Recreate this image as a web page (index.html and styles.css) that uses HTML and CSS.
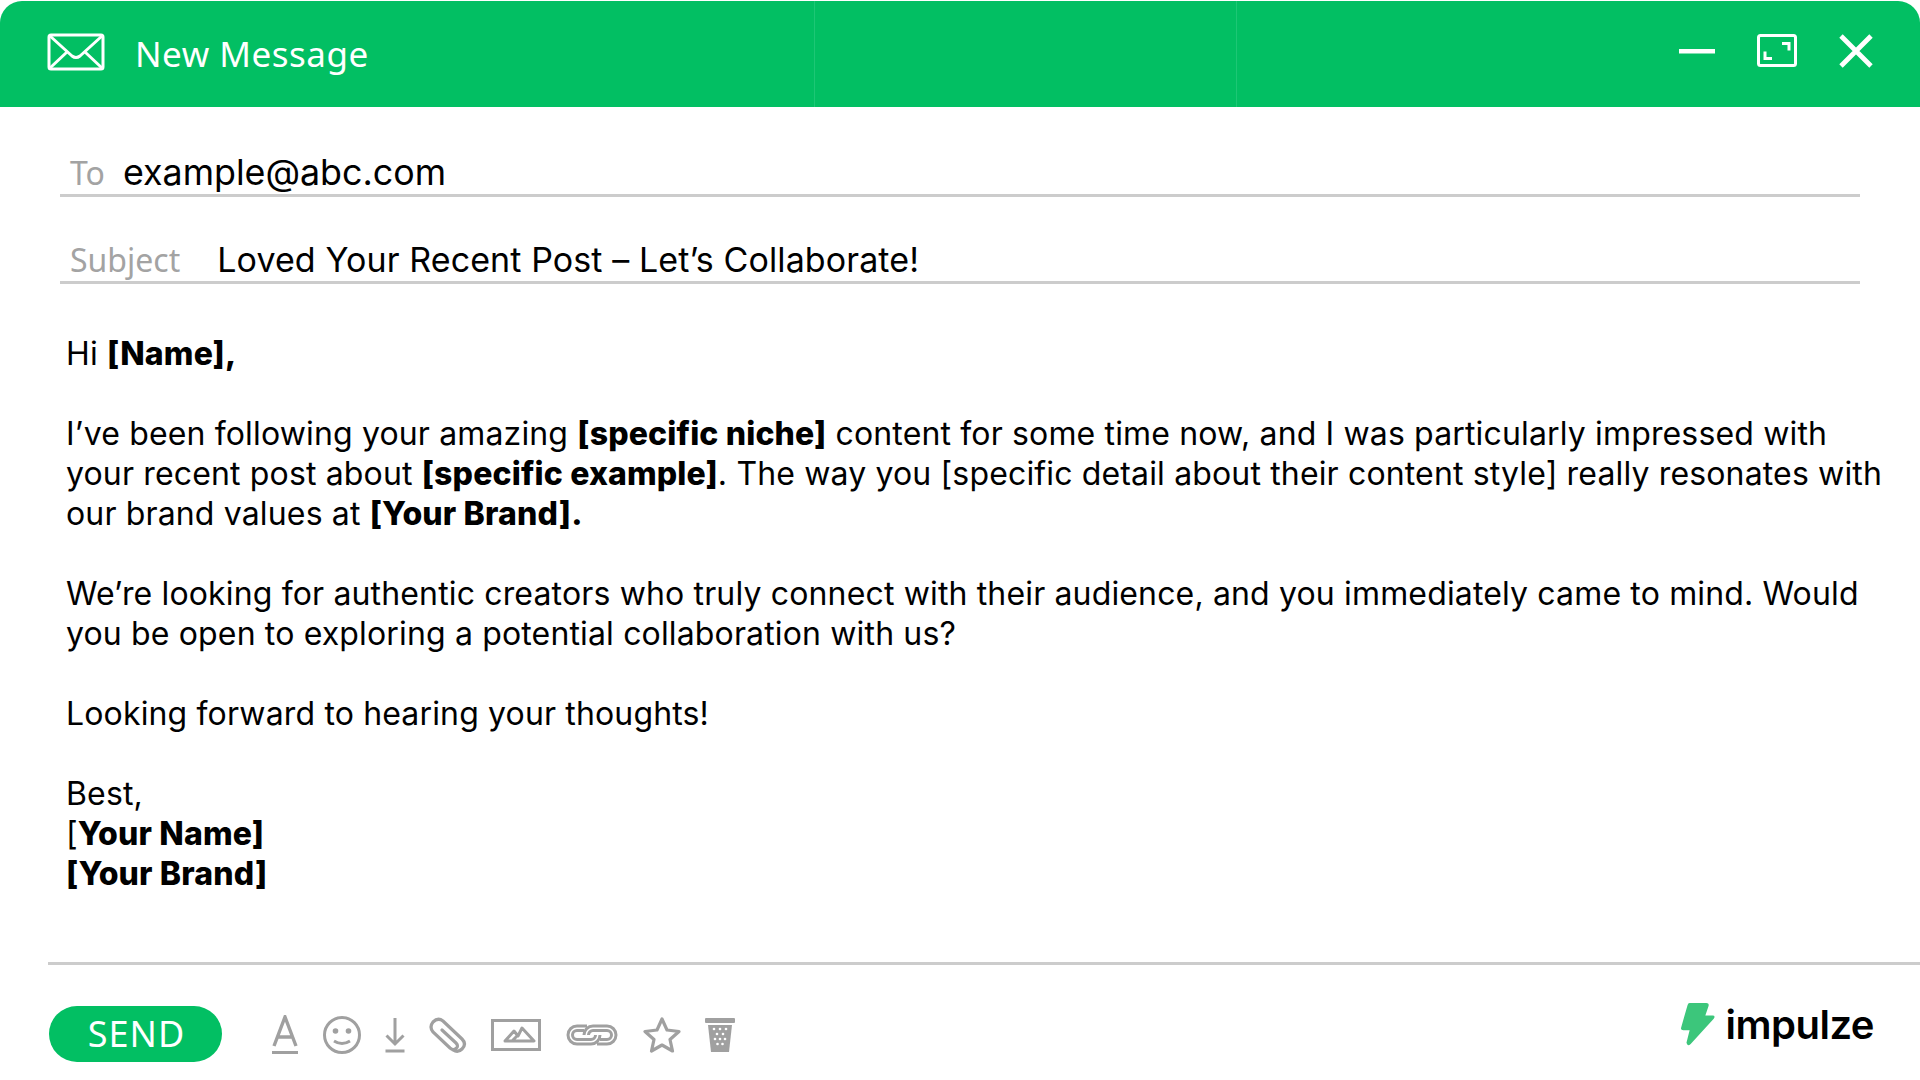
FILE: index.html
```html
<!DOCTYPE html>
<html lang="en">
<head>
  <meta charset="UTF-8">
  <title>New Message</title>
  <link rel="stylesheet" href="styles.css">
</head>
<body>
<div class="window">
  <header class="titlebar">
    <div class="titlebar-left">
      <svg class="mail-icon" width="58" height="38" viewBox="0 0 58 38" fill="none" stroke="#fff" stroke-width="3" stroke-linejoin="round">
        <rect x="2" y="2" width="54" height="34" rx="2"/>
        <path d="M3 3 L25 23 Q29 26 33 23 L55 3"/>
        <path d="M3 35 L20 19 M55 35 L38 19"/>
      </svg>
      <span class="title">New Message</span>
    </div>
    <div class="titlebar-mid"></div>
    <div class="titlebar-right">
      <svg width="36" height="34" viewBox="0 0 36 34"><rect y="15" width="36" height="4.500" fill="#fff"/></svg>
      <svg width="40" height="34" viewBox="0 0 40 34" fill="none" stroke="#fff" stroke-width="3">
        <rect x="1.500" y="1.500" width="37" height="30" rx="2"/>
        <path d="M25 9.500 H32 V16.500 M8 17.500 V24.500 H15"/>
      </svg>
      <svg width="34" height="34" viewBox="0 0 34 34" fill="none" stroke="#fff" stroke-width="4.800"><path d="M2 2 L32 32 M32 2 L2 32"/></svg>
    </div>
  </header>

  <section class="fields">
    <div class="field field-to">
      <span class="field-label">To</span>
      <span class="field-value">example@abc.com</span>
    </div>
    <div class="field field-subject">
      <span class="field-label">Subject</span>
      <span class="field-value">Loved Your Recent Post – Let’s Collaborate!</span>
    </div>
  </section>

  <main class="message">
    <p>Hi <b>[Name],</b></p>
    <p>I’ve been following your amazing <b>[specific niche]</b> content for some time now, and I was particularly impressed with<br>
      your recent post about <b>[specific example]</b>. The way you [specific detail about their content style] really resonates with<br>
      our brand values at <b>[Your Brand].</b></p>
    <p>We’re looking for authentic creators who truly connect with their audience, and you immediately came to mind. Would<br>
      you be open to exploring a potential collaboration with us?</p>
    <p>Looking forward to hearing your thoughts!</p>
    <p>Best,<br>
      [<b>Your Name]</b><br>
      <b>[Your Brand]</b></p>
  </main>

  <footer class="composer">
    <button class="send">SEND</button>
    <div class="tools">
      <svg class="tool" width="28" height="40" viewBox="0 0 28 40" fill="none" stroke="#a0a0a0" stroke-width="2.600">
        <path d="M3 31 L14 2 L25 31 M6.500 22 H21.500" stroke-width="3.400"/>
        <rect x="1" y="36" width="26" height="3" fill="#a0a0a0" stroke="none"/>
      </svg>
      <svg class="tool" width="38" height="38" viewBox="0 0 38 38" fill="none" stroke="#a0a0a0" stroke-width="3">
        <circle cx="19" cy="19" r="17.500"/>
        <circle cx="12.500" cy="15" r="2.800" fill="#a0a0a0" stroke="none"/>
        <circle cx="25.500" cy="15" r="2.800" fill="#a0a0a0" stroke="none"/>
        <path d="M11 25 Q19 30 27 25"/>
      </svg>
      <svg class="tool" width="20" height="36" viewBox="0 0 20 36" fill="none" stroke="#a0a0a0" stroke-width="3">
        <path d="M10 1 V27 M1.500 18.500 L10 27 L18.500 18.500"/>
        <rect x="0.500" y="32.500" width="19" height="3" fill="#a0a0a0" stroke="none"/>
      </svg>
      <svg class="tool" width="38" height="36" viewBox="0 0 38 36" fill="none" stroke="#a0a0a0" stroke-width="3.200" stroke-linecap="round">
        <path d="M13 13 L27 26 Q30 29 27 31.500 Q24.500 34 21 31 L4 15 Q0 10 4 5 Q9 0 14 4 L33 22 Q38 27 33 32 Q29 36 24 33"/>
      </svg>
      <svg class="tool" width="50" height="32" viewBox="0 0 50 32" fill="none" stroke="#a0a0a0" stroke-width="3">
        <rect x="1.500" y="1.500" width="47" height="29"/>
        <path d="M14 22 L23 12 L27 17 L31 9 L43 22 Z M21 22 L27 16" stroke-linejoin="round"/>
      </svg>
      <svg class="tool" width="54" height="22" viewBox="0 0 54 22" fill="none" stroke="#a0a0a0" stroke-width="3">
        <path d="M22 2 H12 A9 9 0 0 0 12 20 H26 A9 9 0 0 0 35 11 M19 6.500 H12 A4.500 4.500 0 0 0 12 15.500 H26 A4.500 4.500 0 0 0 30.500 11"/>
        <path d="M32 20 H42 A9 9 0 0 0 42 2 H28 A9 9 0 0 0 19 11 M35 15.500 H42 A4.500 4.500 0 0 0 42 6.500 H28 A4.500 4.500 0 0 0 23.500 11"/>
      </svg>
      <svg class="tool" width="38" height="36" viewBox="0 0 38 36" fill="none" stroke="#a0a0a0" stroke-width="3.200" stroke-linejoin="round">
        <path d="M19 2 L24 13 L36 14.500 L27 22.500 L29.500 34 L19 28 L8.500 34 L11 22.500 L2 14.500 L14 13 Z"/>
      </svg>
      <svg class="tool" width="30" height="36" viewBox="0 0 30 36">
        <rect x="0" y="1" width="30" height="5" rx="1" fill="#a0a0a0"/>
        <path d="M3 8 H27 L24 35 H6 Z" fill="#a0a0a0"/>
        <g fill="#fff">
          <circle cx="9" cy="12" r="1.300"/><circle cx="15" cy="12" r="1.300"/><circle cx="21" cy="12" r="1.300"/>
          <circle cx="12" cy="17" r="1.300"/><circle cx="18" cy="17" r="1.300"/>
          <circle cx="10" cy="22" r="1.300"/><circle cx="15" cy="22" r="1.300"/><circle cx="20" cy="22" r="1.300"/>
          <circle cx="12.500" cy="27" r="1.300"/><circle cx="17.500" cy="27" r="1.300"/>
        </g>
      </svg>
    </div>
    <div class="brand">
      <svg width="36" height="44" viewBox="0 0 34 42">
        <path d="M9 1 H25 Q28 1 27 4 L24 13 H31 Q34 13 32 16 L10 40 Q7 43 6 39 L9 27 H3 Q0 27 1 24 L7 3 Q7.500 1 9 1 Z" fill="#3cc67b"/>
      </svg>
      <span class="brand-name">impulze</span>
    </div>
  </footer>
</div>
</body>
</html>
```

FILE: styles.css
```css
* {
    box-sizing: border-box;
}

html, body {
    margin: 0;
    background: #fff;
}

.window {
    width: 1920px;
    height: 1080px;
    overflow: hidden;
    display: flex;
    flex-direction: column;
    font-family: "Inter", "Liberation Sans", sans-serif;
    color: #000;
}

/* title bar */
.titlebar {
    display: flex;
    height: 106px;
    margin-top: 1px;
    flex: none;
    background: #02bf63;
    border-radius: 22px 22px 0 0;
}

.titlebar-left {
    width: 815px;
    display: flex;
    align-items: center;
    padding-left: 47px;
    border-right: 1px solid #1dc775;
}

.mail-icon {
    margin-top: -5px;
}

.title {
    margin: -2px 0 0 30px;
    color: #fff;
    font-family: "Noto Sans", sans-serif;
    font-size: 35px;
    letter-spacing: 0.5px;
}

.titlebar-mid {
    width: 422px;
    border-right: 1px solid #1dc775;
}

.titlebar-right {
    flex: 1;
    display: flex;
    align-items: center;
    justify-content: flex-end;
    gap: 42px;
    padding: 0 47px 6px 0;
}

/* to + subject */
.fields {
    flex: none;
    margin: 0 60px;
}

.field {
    display: flex;
    align-items: baseline;
    border-bottom: 3px solid #cccccc;
    padding-left: 10px;
}

.field-to {
    height: 90px;
    padding-top: 44px;
}

.field-subject {
    height: 87px;
    padding-top: 41px;
}

.field-label {
    color: #a3a3a3;
    font-family: "Noto Sans", sans-serif;
    font-size: 32px;
}

.field-value {
    line-height: 40px;
}

.field-to .field-value {
    margin-left: 18px;
    font-size: 35.8px;
}

.field-subject .field-value {
    margin-left: 37px;
    font-size: 34px;
    letter-spacing: 0.1px;
}

/* body of the mail */
.message {
    flex: none;
    padding: 50px 0 0 66px;
    font-size: 32px;
    line-height: 40px;
    letter-spacing: 0.15px;
    white-space: nowrap;
}

.message p {
    margin: 0 0 40px;
}

.message p:last-child {
    margin-bottom: 0;
}

.message b {
    font-weight: 800;
}

/* bottom bar */
.composer {
    flex: none;
    display: flex;
    align-items: center;
    margin: auto 0 0 48px;
    height: 118px;
    padding: 22px 46px 0 1px;
    border-top: 3px solid #cccccc;
}

.send {
    width: 173px;
    height: 56px;
    border: 0;
    padding: 0 0 0 2px;
    border-radius: 28px;
    background: #02bf63;
    color: #fff;
    font-family: "Noto Sans", sans-serif;
    font-size: 36px;
    letter-spacing: 1px;
}

.tools {
    display: flex;
    align-items: center;
    gap: 24px;
    margin: 3px 0 0 49px;
}

.brand {
    margin-left: auto;
    margin-bottom: 19px;
    display: flex;
    align-items: center;
    gap: 10px;
}

.brand-name {
    font-size: 40px;
    font-weight: 600;
    letter-spacing: -0.5px;
}
```
